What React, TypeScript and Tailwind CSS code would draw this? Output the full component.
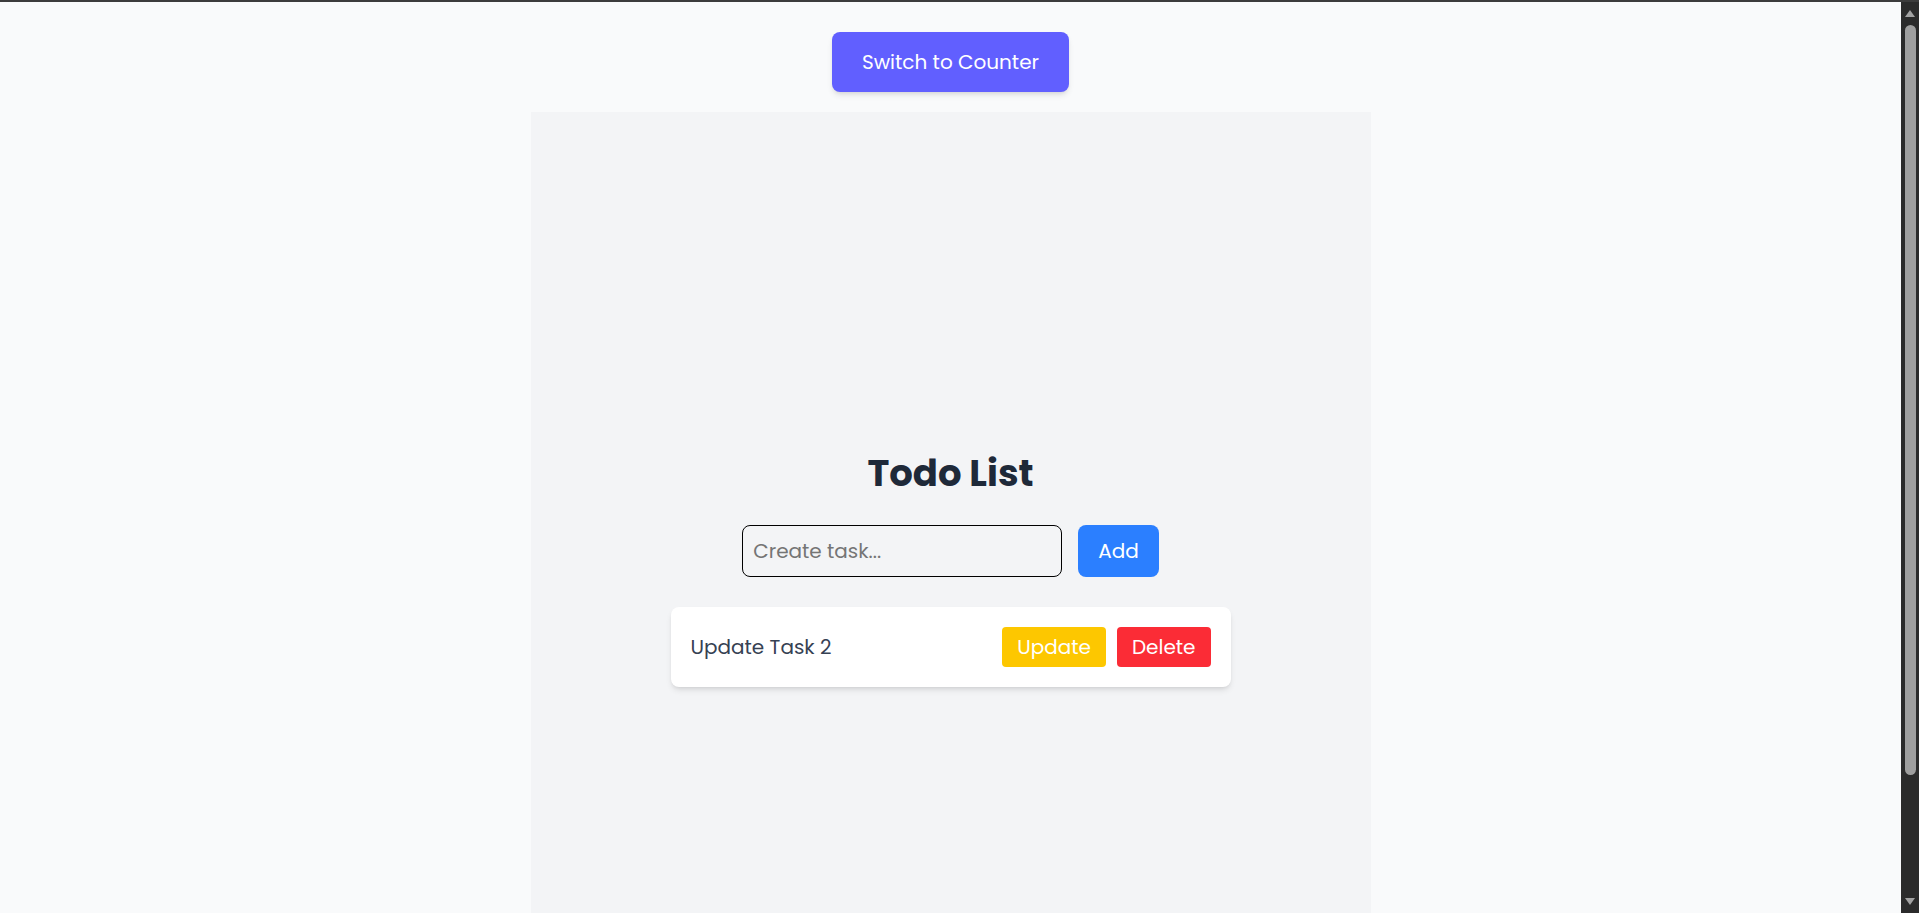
import { useState } from 'react';

interface Task {
    id: number;
    title: string;
}

function Scrollbar() {
    return (
        <div className="flex w-[18px] shrink-0 flex-col items-center bg-[#2b2b2b] py-[5px]">
            <svg width="12" height="10" viewBox="0 0 12 10" className="mt-[2px] shrink-0">
                <path d="M6 1 L11 8 L1 8 Z" fill="#a3a3a3" />
            </svg>
            <div className="mt-[6px] h-[750px] w-[11px] rounded-full bg-[#9f9f9f]" />
            <div className="flex-1" />
            <svg width="12" height="10" viewBox="0 0 12 10" className="mb-[2px] shrink-0">
                <path d="M1 2 L11 2 L6 9 Z" fill="#a3a3a3" />
            </svg>
        </div>
    );
}

export default function App() {
    const [tasks] = useState<Task[]>([{ id: 2, title: 'Update Task 2' }]);
    const [text, setText] = useState('');

    return (
        <div className="flex h-screen border-t-2 border-[#3c3c3c] bg-gray-50">
            <main className="flex-1 overflow-y-auto [scrollbar-width:none]">
                <div className="flex flex-col items-center font-['Poppins','Open_Sans',sans-serif]">
                    {/* Toggle */}
                    <button className="mt-[30px] mb-5 rounded-lg bg-indigo-500 px-[30px] py-4 text-xl text-white shadow-md">
                        Switch to Counter
                    </button>

                    {/* Todo panel */}
                    <div className="flex min-h-screen w-[840px] flex-col items-center justify-center bg-gray-100 pt-[2px]">
                        <h1 className="mb-8 text-[37px] leading-10 font-bold text-gray-800">Todo List</h1>

                        <div className="flex items-center gap-4">
                            <input
                                value={text}
                                onChange={(e) => setText(e.target.value)}
                                placeholder="Create task..."
                                className="w-80 rounded-lg border border-black bg-transparent px-2.5 py-[11px] text-xl text-gray-800 placeholder:text-[#757575] outline-none"
                            />
                            <button className="rounded-lg bg-blue-500 px-5 py-3 text-xl text-white">Add</button>
                        </div>

                        <ul className="mt-[30px] flex flex-col gap-3">
                            {tasks.map((task) => (
                                <li
                                    key={task.id}
                                    className="flex w-[560px] items-center justify-between rounded-lg bg-white px-5 py-5 shadow-md"
                                >
                                    <span className="text-xl text-gray-700">{task.title}</span>
                                    <div className="flex items-center gap-[11px]">
                                        <button className="rounded bg-yellow-400 px-[15px] py-1.5 text-xl text-white">Update</button>
                                        <button className="rounded bg-red-500 px-[15px] py-1.5 text-xl text-white">Delete</button>
                                    </div>
                                </li>
                            ))}
                        </ul>
                    </div>
                </div>
            </main>
            <Scrollbar />
        </div>
    );
}
